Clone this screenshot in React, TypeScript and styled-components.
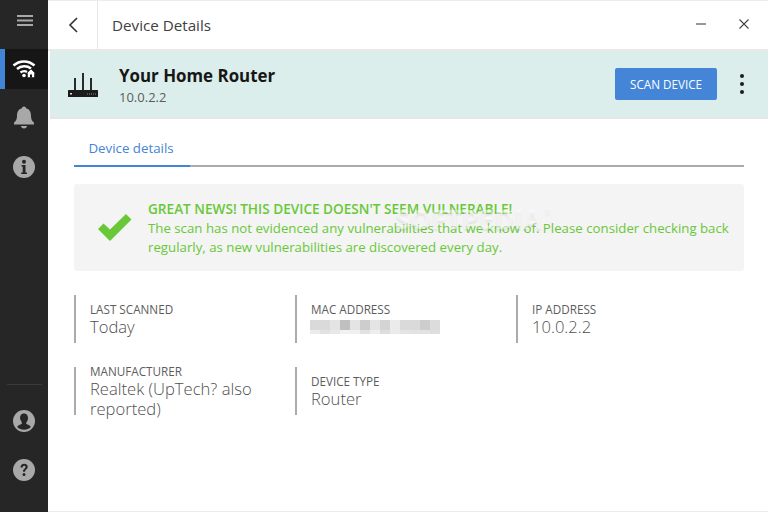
import React from "react";
import styled, { createGlobalStyle } from "styled-components";

const Global = createGlobalStyle`
  html, body { margin: 0; padding: 0; width: 768px; height: 512px; overflow: hidden; background: #fff; }
  body { font-family: "Open Sans", "Noto Sans", sans-serif; }
  * { box-sizing: border-box; }
`;

const Shell = styled.div`
  width: 768px; height: 512px; display: flex; background: #fff;
`;
const Sidebar = styled.nav`
  width: 48px; height: 512px; background: #262626; display: flex; flex-direction: column; flex: none;
`;
const MenuCell = styled.div`
  height: 49px; display: flex; align-items: flex-start; justify-content: center; padding: 15px 0 0 2px;
`;
const NavItem = styled.div<{ $active?: boolean; $gap: number }>`
  height: 40px; display: flex; align-items: center; justify-content: center;
  margin-bottom: ${p => p.$gap}px;
  background: ${p => (p.$active ? "#161616" : "transparent")};
  border-left: ${p => (p.$active ? "5px solid #4285d6" : "none")};
  padding-right: ${p => (p.$active ? "5px" : "0")};
`;
const Spacer = styled.div`flex: 1;`;
const NavRule = styled.div`
  height: 1px; background: #3a3a3a; margin: 0 6px 16px 7px;
`;
const Main = styled.main`
  flex: 1; min-width: 0; display: flex; flex-direction: column; position: relative;
`;
const TopBar = styled.header`
  height: 51px; display: flex; align-items: stretch;
  border-top: 1px solid #ececec; border-bottom: 2px solid #e9e9e9;
`;
const BackCell = styled.div`
  width: 50px; display: flex; align-items: center; justify-content: center;
  border-right: 1px solid #e6e6e6;
`;
const Title = styled.h1`
  margin: 0; padding-left: 14px; flex: 1; font-weight: 400; font-size: 15.2px; line-height: 49px; color: #404040;
`;
const WinButton = styled.div`
  width: 40px; display: flex; align-items: center; justify-content: center; padding-bottom: 3px;
`;
const WinGroup = styled.div`
  display: flex; gap: 3px; padding-right: 4px;
`;
const Banner = styled.section`
  height: 68px; margin-left: 2px; display: flex; align-items: center;
  background: #dceeec; border-bottom: 2px solid #e6e6e6; padding: 0 13px 0 17px;
`;
const RouterBox = styled.div`
  width: 32px; height: 32px; flex: none; margin-right: 20px;
`;
const BannerText = styled.div`
  flex: 1; display: flex; flex-direction: column; padding-top: 2px;
`;
const DeviceName = styled.div`
  font-size: 16.9px; font-weight: 700; line-height: 22px; color: #171717;
`;
const DeviceIp = styled.div`
  font-size: 13px; line-height: 17px; color: #5c5c5c; margin-top: 2px;
`;
const ScanButton = styled.button`
  width: 102px; height: 32px; border: 0; border-radius: 2px; background: #4485d8; color: #fff;
  font-family: inherit; font-size: 11.7px; font-weight: 400; padding: 0; margin-right: 12px;
  display: flex; align-items: center; justify-content: center;
`;
const Kebab = styled.div`
  width: 26px; display: flex; justify-content: center;
`;
const Content = styled.div`
  flex: 1; padding: 0 24px 0 26px; display: flex; flex-direction: column;
`;
const TabRow = styled.div`
  height: 48px; border-bottom: 2px solid #ababab; display: flex;
`;
const Tab = styled.div`
  width: 116px; height: 48px; border-bottom: 2px solid #4285d6; text-align: center; padding-right: 2px;
  font-size: 13.3px; line-height: 58px; color: #4285d6;
`;
const Notice = styled.div`
  margin-top: 17px; height: 87px; background: #f4f4f4; border-radius: 3px; display: flex; align-items: center;
  padding: 0 0 0 24px;
`;
const CheckBox = styled.div`
  width: 34px; height: 28px; flex: none; margin-right: 16px; margin-top: 1px;
`;
const NoticeText = styled.div`
  color: #69c837; font-size: 13.25px; line-height: 19px; white-space: nowrap; margin-top: 1px;
`;
const NoticeHead = styled.div`
  font-weight: 600; font-size: 13.6px; line-height: 20px;
`;
const Watermark = styled.div`
  position: absolute; left: 347px; top: 201px; font-size: 27px; line-height: 36px; font-weight: 700;
  color: rgba(255,255,255,0.5); text-shadow: 0 2px 2px rgba(0,0,0,0.07); pointer-events: none;
`;
const WatermarkMark = styled.sup`
  font-size: 9px; font-weight: 400; vertical-align: top; line-height: 20px; margin-left: 2px;
`;
const Grid = styled.div`
  margin-top: 24px; display: grid; grid-template-columns: repeat(3, 221px); row-gap: 24px;
`;
const Field = styled.div`
  height: 48px; border-left: 2px solid #ababab; padding: 1px 0 0 14px; display: flex; flex-direction: column; justify-content: center;
`;
const FieldLabel = styled.div`
  font-size: 11.7px; line-height: 14px; color: #5c5c5c;
`;
const FieldValue = styled.div`
  font-size: 16.6px; line-height: 20px; color: #505050; font-weight: 300; margin-top: 1px;
`;
const Mosaic = styled.div`
  display: grid; grid-template-columns: repeat(13, 10px); grid-template-rows: 10px 4px; margin: 4px 0 3px -1px;
`;
const Pixel = styled.div<{ $g: number }>`
  background: rgb(${p => p.$g}, ${p => p.$g}, ${p => p.$g});
`;
const BottomEdge = styled.div`height: 1px; background: #ececec;`;

const top = [218,218,228,192,228,205,228,212,235,218,218,205,220];
const low = [235,226,232,242,240,226,238,222,235,228,226,226,222];

const Sv = styled.svg`display: block;`;

export default function App() {
  return (
    <Shell>
      <Global />
      <Sidebar>
        <MenuCell>
          <Sv width="16" height="11" viewBox="0 0 16 11"><path d="M0 1h16M0 5.500h16M0 10h16" stroke="#a8a8a8" strokeWidth="1.800" /></Sv>
        </MenuCell>
        <NavItem $active $gap={8}>
          <Sv width="24" height="20" viewBox="0 0 24 20" fill="none">
            <path d="M1.500 6.500C7.500 1 16.500 1 22.500 6.500" stroke="#fff" strokeWidth="2.500" />
            <path d="M5 10C9 6.500 15 6.500 19 9.500" stroke="#fff" strokeWidth="2.500" />
            <path d="M8.500 13.500C10.500 12 13.500 12 15 13" stroke="#fff" strokeWidth="2.200" />
            <circle cx="12" cy="16.500" r="1.800" fill="#fff" />
            <path d="M19 10l4.500 4.500H22.500V18.500H15.500V14.500H14.500z" fill="#fff" stroke="#161616" strokeWidth=".6" />
            <rect x="18" y="15.500" width="2" height="3" fill="#161616" />
          </Sv>
        </NavItem>
        <NavItem $gap={10}>
          <Sv width="22" height="24" viewBox="0 0 22 24">
            <path d="M11 1.500c1.300 0 2 .8 2 1.800 3.600.9 5 4 5 7.500 0 3.300.8 5 3 7v1.700H1V17.800c2.200-2 3-3.700 3-7 0-3.500 1.400-6.600 5-7.500 0-1 .7-1.800 2-1.800z" fill="#a8a8a8" />
            <path d="M8 21h6c0 1.600-1.300 2.500-3 2.500S8 22.600 8 21z" fill="#a8a8a8" />
          </Sv>
        </NavItem>
        <NavItem $gap={0}>
          <Sv width="22" height="22" viewBox="0 0 22 22">
            <circle cx="11" cy="11" r="11" fill="#a8a8a8" />
            <circle cx="11" cy="5.800" r="2" fill="#262626" />
            <path d="M8.500 9h4v7.500h1.500V18H8.200v-1.500h1.500v-6H8.500z" fill="#262626" />
          </Sv>
        </NavItem>
        <Spacer />
        <NavRule />
        <NavItem $gap={9}>
          <Sv width="22" height="22" viewBox="0 0 22 22">
            <circle cx="11" cy="11" r="11" fill="#a8a8a8" />
            <path d="M11 3.500c2.600 0 4 2 4 4.500 0 2.200-.9 3.700-1.800 4.700v1.100c1.500 1.100 3.800 1.200 4.600 3.200-1.700 1.700-4.200 2.700-6.800 2.700s-5.100-1-6.800-2.700c.8-2 3.100-2.100 4.600-3.200v-1.100C8.900 11.700 7 10.200 7 8c0-2.500 1.400-4.500 4-4.500z" fill="#262626" />
          </Sv>
        </NavItem>
        <NavItem $gap={22}>
          <Sv width="22" height="22" viewBox="0 0 22 22">
            <circle cx="11" cy="11" r="11" fill="#a8a8a8" />
            <path d="M7.500 8.500C7.500 6 9 4.800 11.200 4.800c2.100 0 3.500 1.200 3.500 3 0 2.700-2.600 2.600-2.600 5H10c0-3.300 2.500-3.300 2.500-4.900 0-.7-.5-1.200-1.300-1.200-.9 0-1.500.7-1.500 1.800z" fill="#262626" />
            <circle cx="11" cy="15.500" r="1.500" fill="#262626" />
          </Sv>
        </NavItem>
      </Sidebar>
      <Main>
        <TopBar>
          <BackCell>
            <Sv width="10" height="16" viewBox="0 0 10 16" fill="none"><path d="M9 1L2 8l7 7" stroke="#333" strokeWidth="1.600" /></Sv>
          </BackCell>
          <Title>Device Details</Title>
          <WinGroup>
            <WinButton><Sv width="10" height="10" viewBox="0 0 10 10"><path d="M0 5h10" stroke="#333" strokeWidth="1" /></Sv></WinButton>
            <WinButton><Sv width="10" height="10" viewBox="0 0 10 10"><path d="M.5.500l9 9M9.500.500l-9 9" stroke="#444" strokeWidth="1.100" /></Sv></WinButton>
          </WinGroup>
        </TopBar>
        <Banner>
          <RouterBox>
            <Sv width="32" height="32" viewBox="0 0 32 32">
              <path d="M8 10v12M16 5v17M24 10v12" stroke="#2a2a2a" strokeWidth="2" />
              <rect x="1" y="22" width="30" height="7" rx=".5" fill="#1b1b1b" />
              <rect x="3" y="25" width="2" height="1.500" fill="#ddd" />
              <path d="M20 26h9" stroke="#888" strokeWidth="1" strokeDasharray="1 1" />
            </Sv>
          </RouterBox>
          <BannerText>
            <DeviceName>Your Home Router</DeviceName>
            <DeviceIp>10.0.2.2</DeviceIp>
          </BannerText>
          <ScanButton>SCAN DEVICE</ScanButton>
          <Kebab>
            <Sv width="4" height="20" viewBox="0 0 4 20" fill="#1d1d1d"><circle cx="2" cy="2" r="2" /><circle cx="2" cy="10" r="2" /><circle cx="2" cy="18" r="2" /></Sv>
          </Kebab>
        </Banner>
        <Content>
          <TabRow><Tab>Device details</Tab></TabRow>
          <Notice>
            <CheckBox>
              <Sv width="34" height="28" viewBox="0 0 34 28"><path d="M0 15l5.500-5.500 6.500 6L28 0l5.500 5.500L12 27z" fill="#69c837" /></Sv>
            </CheckBox>
            <NoticeText>
              <NoticeHead>GREAT NEWS! THIS DEVICE DOESN'T SEEM VULNERABLE!</NoticeHead>
              <div>The scan has not evidenced any vulnerabilities that we know of. Please consider checking back</div>
              <div>regularly, as new vulnerabilities are discovered every day.</div>
            </NoticeText>
          </Notice>
          <Watermark>SOFTPEDIA<WatermarkMark>®</WatermarkMark></Watermark>
          <Grid>
            <Field><FieldLabel>LAST SCANNED</FieldLabel><FieldValue>Today</FieldValue></Field>
            <Field>
              <FieldLabel>MAC ADDRESS</FieldLabel>
              <Mosaic>
                {top.map((g, i) => <Pixel key={"t" + i} $g={g} />)}
                {low.map((g, i) => <Pixel key={"l" + i} $g={g} />)}
              </Mosaic>
            </Field>
            <Field><FieldLabel>IP ADDRESS</FieldLabel><FieldValue>10.0.2.2</FieldValue></Field>
            <Field><FieldLabel>MANUFACTURER</FieldLabel><FieldValue>Realtek (UpTech? also<br />reported)</FieldValue></Field>
            <Field><FieldLabel>DEVICE TYPE</FieldLabel><FieldValue>Router</FieldValue></Field>
          </Grid>
        </Content>
        <BottomEdge />
      </Main>
    </Shell>
  );
}
